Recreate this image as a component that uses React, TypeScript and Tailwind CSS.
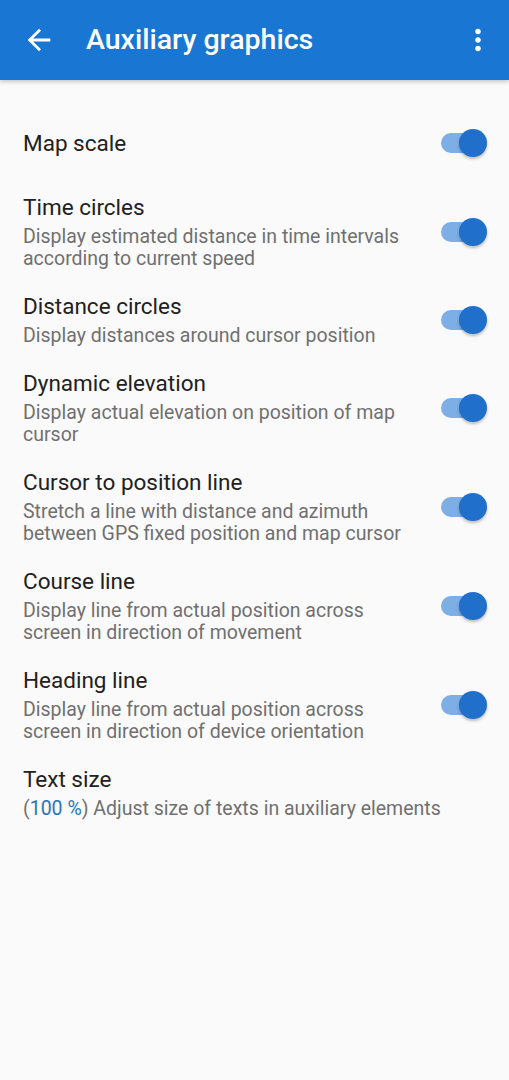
import React from "react";

type Pref = {
  title: string;
  summary?: React.ReactNode;
  toggle?: boolean;
};

const prefs: Pref[] = [
  { title: "Map scale", toggle: true },
  {
    title: "Time circles",
    summary: "Display estimated distance in time intervals according to current speed",
    toggle: true,
  },
  { title: "Distance circles", summary: "Display distances around cursor position", toggle: true },
  {
    title: "Dynamic elevation",
    summary: "Display actual elevation on position of map cursor",
    toggle: true,
  },
  {
    title: "Cursor to position line",
    summary: "Stretch a line with distance and azimuth between GPS fixed position and map cursor",
    toggle: true,
  },
  {
    title: "Course line",
    summary: "Display line from actual position across screen in direction of movement",
    toggle: true,
  },
  {
    title: "Heading line",
    summary: "Display line from actual position across screen in direction of device orientation",
    toggle: true,
  },
  {
    title: "Text size",
    summary: (
      <>
        (<span className="text-[#2a73b8]">100 %</span>) Adjust size of texts in auxiliary elements
      </>
    ),
  },
];

function Toggle() {
  return (
    <div className="relative w-[46px] h-[30px] shrink-0">
      <div className="absolute left-0 top-[5px] w-[38px] h-[20px] rounded-full bg-[#7eaee6]" />
      <div className="absolute right-0 top-[1px] w-[28px] h-[28px] rounded-full bg-[#1f6fcb] shadow-[0_2px_3px_rgba(0,0,0,0.25)]" />
    </div>
  );
}

function PrefRow({ pref }: { pref: Pref }) {
  return (
    <div className="flex items-center pl-[23px] pr-[22px] py-[11.5px]">
      <div className="flex-1 pr-6">
        <div className="text-[22.5px] leading-[26px] text-[#212121]">{pref.title}</div>
        {pref.summary && (
          <div className="mt-[6px] text-[19.5px] leading-[22px] text-[#707070]">{pref.summary}</div>
        )}
      </div>
      {pref.toggle && <Toggle />}
    </div>
  );
}

export default function App() {
  return (
    <div className="min-h-screen bg-[#fafafa]" style={{ fontFamily: "Roboto, 'Noto Sans', sans-serif" }}>
      <header className="h-[80px] bg-[#1976d2] flex items-center shadow-[0_2px_4px_rgba(0,0,0,0.2)]">
        <svg viewBox="0 0 24 24" className="w-[34px] h-[34px] ml-[22px]" fill="white">
          <path d="M20 11H7.83l5.59-5.59L12 4l-8 8 8 8 1.41-1.41L7.83 13H20v-2z" />
        </svg>
        <h1 className="ml-[30px] flex-1 text-[28.5px] font-medium text-white">Auxiliary graphics</h1>
        <svg viewBox="0 0 24 24" className="w-[34px] h-[34px] mr-[14px]" fill="white">
          <path d="M12 8c1.1 0 2-.9 2-2s-.9-2-2-2-2 .9-2 2 .9 2 2 2zm0 2c-1.1 0-2 .9-2 2s.9 2 2 2 2-.9 2-2-.9-2-2-2zm0 6c-1.1 0-2 .9-2 2s.9 2 2 2 2-.9 2-2-.9-2-2-2z" />
        </svg>
      </header>
      <div className="pt-[24px]">
        <div className="flex items-center pl-[23px] pr-[22px] h-[78px]">
          <div className="flex-1 text-[22.5px] leading-[26px] text-[#212121]">{prefs[0].title}</div>
          <Toggle />
        </div>
        {prefs.slice(1).map((p) => (
          <PrefRow key={p.title} pref={p} />
        ))}
      </div>
    </div>
  );
}
